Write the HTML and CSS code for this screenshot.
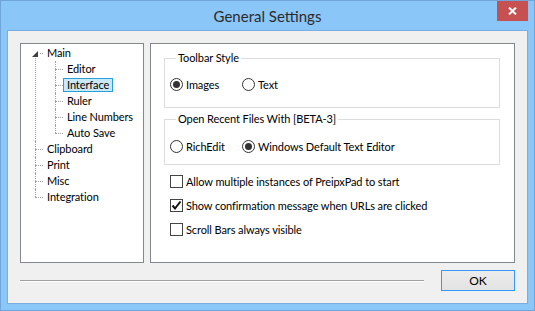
FILE: index.html
```html
<!DOCTYPE html>
<html lang="en">
<head>
    <meta charset="UTF-8">
    <title>General Settings</title>
    <link rel="stylesheet" href="styles.css">
</head>
<body>
    <div class="window">
        <div class="titlebar">
            <span></span>
            <div class="title">General Settings</div>
            <button class="close-btn">
                <svg width="9" height="8" viewBox="0 0 9 8">
                    <path d="M1 0.5 L8 7.5 M8 0.5 L1 7.5" stroke="#fff" stroke-width="2"/>
                </svg>
            </button>
        </div>
        <div class="client">
            <div class="main">
                <ul class="tree">
                    <li class="root open">
                        <span class="toggle"></span><span class="label">Main</span>
                        <ul class="children">
                            <li><span class="label">Editor</span></li>
                            <li><span class="label selected">Interface</span></li>
                            <li><span class="label">Ruler</span></li>
                            <li><span class="label">Line Numbers</span></li>
                            <li><span class="label">Auto Save</span></li>
                        </ul>
                    </li>
                    <li class="root"><span class="label">Clipboard</span></li>
                    <li class="root"><span class="label">Print</span></li>
                    <li class="root"><span class="label">Misc</span></li>
                    <li class="root"><span class="label">Integration</span></li>
                </ul>
                <div class="panel">
                    <fieldset class="group group-toolbar">
                        <legend>Toolbar Style</legend>
                        <div class="options">
                            <label class="option"><span class="radio checked"></span>Images</label>
                            <label class="option"><span class="radio"></span>Text</label>
                        </div>
                    </fieldset>
                    <fieldset class="group group-recent">
                        <legend>Open Recent Files With [BETA-3]</legend>
                        <div class="options">
                            <label class="option"><span class="radio"></span>RichEdit</label>
                            <label class="option"><span class="radio checked"></span>Windows Default Text Editor</label>
                        </div>
                    </fieldset>
                    <div class="checks">
                        <label class="check-row"><span class="checkbox"></span>Allow multiple instances of PreipxPad to start</label>
                        <label class="check-row"><span class="checkbox checked">
                            <svg width="11" height="11" viewBox="0 0 11 11"><path d="M1.5 5.5 L4 8.5 L9.5 1.5" fill="none" stroke="#111" stroke-width="2"/></svg>
                        </span>Show confirmation message when URLs are clicked</label>
                        <label class="check-row"><span class="checkbox"></span>Scroll Bars always visible</label>
                    </div>
                </div>
            </div>
            <div class="footer">
                <div class="separator"></div>
                <button class="ok-btn">OK</button>
            </div>
        </div>
    </div>
</body>
</html>
```

FILE: styles.css
```css
body {
    margin: 0;
    font-family: Lato, "Noto Sans", sans-serif;
    font-size: 11px;
    letter-spacing: -0.1px;
    color: #000;
}
.window {
    width: 535px;
    height: 311px;
    box-sizing: border-box;
    border: 1px solid #6fa5da;
    background-color: #8bc6f8;
    padding: 0 6px 6px 6px;
    display: flex;
    flex-direction: column;
}
.titlebar {
    height: 29px;
    display: grid;
    grid-template-columns: 1fr auto 1fr;
}
.title {
    font-size: 15px;
    letter-spacing: 0;
    line-height: 31px;
    color: #2b2b2b;
}
.close-btn {
    justify-self: end;
    width: 31px;
    height: 20px;
    border: none;
    padding: 0;
    background-color: #c75050;
    display: flex;
    align-items: center;
    justify-content: center;
}
.client {
    flex: 1;
    border: 1px solid #7aaee0;
    background-color: #f0f0f0;
    padding: 12px;
    display: flex;
    flex-direction: column;
}
.main {
    height: 220px;
    display: flex;
    gap: 6px;
}
.tree {
    width: 124px;
    box-sizing: border-box;
    border: 1px solid #828790;
    background-color: #fff;
    list-style: none;
    margin: 0;
    padding: 1px 0 0 0;
    line-height: 16px;
}
.tree li {
    position: relative;
}
.tree .label {
    display: inline-block;
    vertical-align: top;
    height: 14px;
    line-height: 12px;
    box-sizing: border-box;
    border: 1px solid transparent;
    padding: 0 3px;
    margin: 1px 0;
    white-space: nowrap;
}
.tree .label.selected {
    background-color: #cbe8f6;
    border-color: #26a0da;
}
.tree li::before {
    content: '';
    position: absolute;
    top: 8px;
    width: 8px;
    border-top: 1px dotted #a0a0a0;
}
.tree li::after {
    content: '';
    position: absolute;
    top: 0;
    bottom: 0;
    border-left: 1px dotted #a0a0a0;
}
.tree > li {
    padding-left: 22px;
}
.tree > li::before,
.tree > li::after {
    left: 14px;
}
.tree > li.open::before {
    left: 19px;
    width: 3px;
}
.tree > li.open::after {
    top: 13px;
}
.tree li:last-child::after {
    bottom: auto;
    height: 8px;
}
.toggle {
    position: absolute;
    left: 11px;
    top: 6px;
    width: 0;
    height: 0;
    border-left: 6px solid transparent;
    border-bottom: 6px solid #404040;
}
.children {
    list-style: none;
    margin: 0;
    padding: 0;
}
.children li {
    padding-left: 20px;
}
.children li::before,
.children li::after {
    left: 12px;
}
.panel {
    flex: 1;
    box-sizing: border-box;
    border: 1px solid #828790;
    background-color: #fff;
    padding: 6px 14px 0 13px;
}
.group {
    margin: 0;
    border: 1px solid #dcdcdc;
    padding: 10px 0 15px 5px;
}
.group legend {
    padding: 0 2px;
    margin-left: 6px;
    line-height: 16px;
}
.group-recent {
    margin-top: 3px;
    padding-top: 11px;
    padding-bottom: 10px;
}
.options {
    display: flex;
}
.option {
    width: 72px;
    height: 16px;
    display: flex;
    align-items: center;
    white-space: nowrap;
}
.radio {
    position: relative;
    width: 13px;
    height: 13px;
    box-sizing: border-box;
    border: 1px solid #333;
    border-radius: 50%;
    background-color: #fff;
    margin-right: 3px;
    flex: none;
}
.radio.checked::after {
    content: '';
    position: absolute;
    left: 2px;
    top: 2px;
    width: 7px;
    height: 7px;
    border-radius: 50%;
    background-color: #333;
}
.checks {
    margin: 8px 0 0 6px;
    display: flex;
    flex-direction: column;
    gap: 8px;
}
.check-row {
    height: 16px;
    display: flex;
    align-items: center;
    white-space: nowrap;
}
.checkbox {
    width: 13px;
    height: 13px;
    box-sizing: border-box;
    border: 1px solid #444;
    background-color: #fff;
    margin-right: 3px;
    flex: none;
    display: flex;
    align-items: center;
    justify-content: center;
}
.footer {
    margin-top: 7px;
    display: flex;
    align-items: center;
    gap: 17px;
}
.separator {
    flex: 1;
    border-top: 1px solid #a0a0a0;
    border-bottom: 1px solid #fff;
}
.ok-btn {
    width: 74px;
    height: 21px;
    box-sizing: border-box;
    border: 1px solid #3399ff;
    background: linear-gradient(#ececec, #e3e3e3);
    font-family: inherit;
    font-size: 12px;
    color: #000;
    padding: 0;
}
```
